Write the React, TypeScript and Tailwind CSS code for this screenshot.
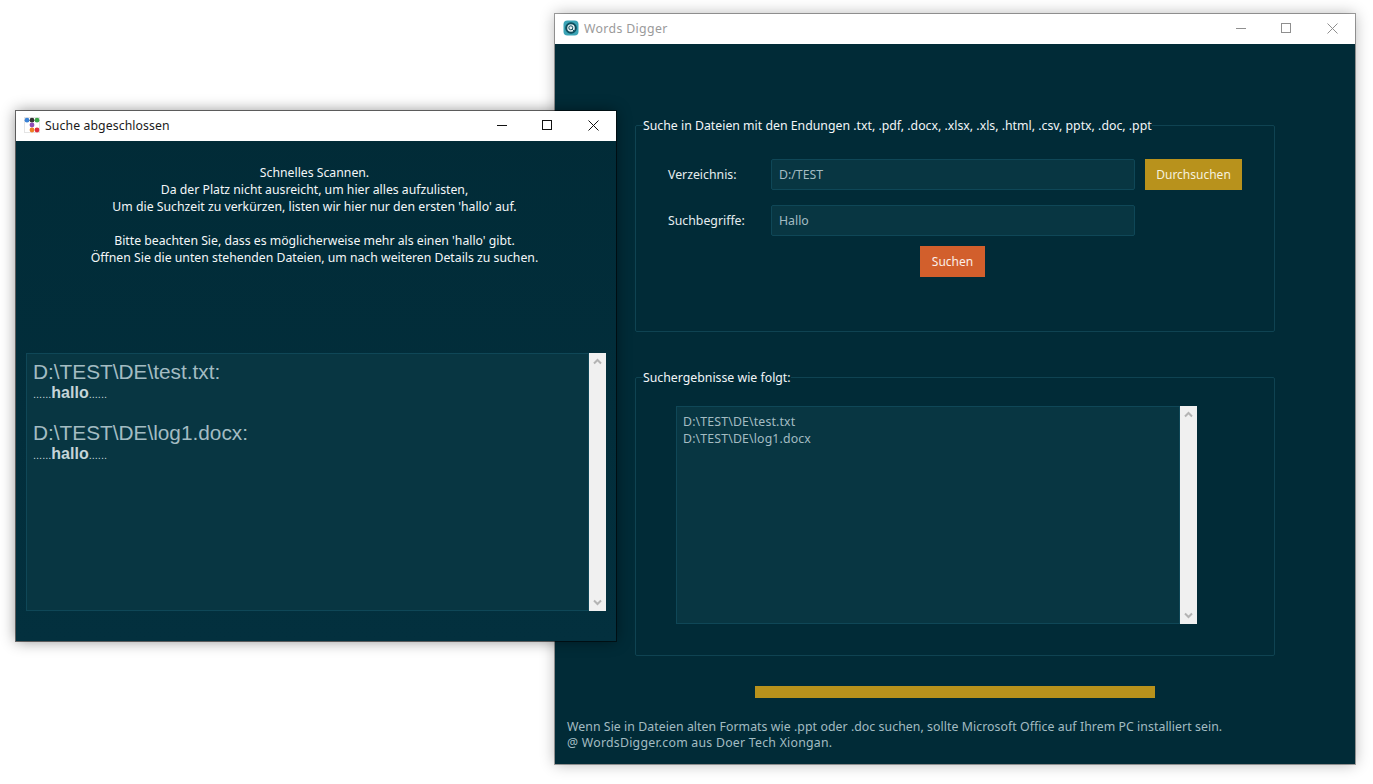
const ui = '"Noto Sans", "Open Sans", sans-serif';

function Chevron({ up, className }: { up?: boolean; className?: string }) {
  return (
    <svg width="9" height="7" viewBox="0 0 9 7" className={className}>
      <path d={up ? "M1 5.5 L4.5 2 L8 5.5" : "M1 1.5 L4.5 5 L8 1.5"} fill="none" stroke="#b4b4b4" strokeWidth="2" />
    </svg>
  );
}

function Scrollbar() {
  return (
    <div className="w-[17px] shrink-0 bg-[#f0f0f0] flex flex-col items-center justify-between py-[5px]">
      <Chevron up />
      <Chevron />
    </div>
  );
}

function WinButtons({ color }: { color: string }) {
  return (
    <div className="flex items-center">
      <div className="w-[46px] flex justify-center pl-[2px]">
        <svg width="10" height="10" viewBox="0 0 10 10"><path d="M0 5.5H10" stroke={color} /></svg>
      </div>
      <div className="w-[46px] flex justify-center">
        <svg width="10" height="10" viewBox="0 0 10 10"><rect x=".5" y=".5" width="9" height="9" fill="none" stroke={color} /></svg>
      </div>
      <div className="w-[46px] flex justify-center">
        <svg width="11" height="11" viewBox="0 0 11 11"><path d="M.5 .5L10.5 10.5M10.5 .5L.5 10.5" stroke={color} /></svg>
      </div>
    </div>
  );
}

function DotsIcon() {
  return (
    <svg width="16" height="16" viewBox="0 0 16 16">
      <rect x=".5" y=".5" width="15" height="15" fill="#fff" stroke="#e4e4e4" />
      <circle cx="3" cy="3.2" r="2.4" fill="#3b82d6" />
      <circle cx="8" cy="3.2" r="2.4" fill="#333" />
      <circle cx="13" cy="3.2" r="2.4" fill="#3aa648" />
      <circle cx="8" cy="8" r="2.4" fill="#8e4bb5" />
      <circle cx="8" cy="13" r="2.4" fill="#ee7f22" />
      <circle cx="13" cy="13" r="2.4" fill="#e02b3c" />
    </svg>
  );
}

function DiggerIcon() {
  return (
    <svg width="16" height="16" viewBox="0 0 16 16">
      <rect x="0.5" y="0.5" width="15" height="15" rx="4" fill="#3aa3b5" />
      <circle cx="8" cy="8" r="5.8" fill="#0c4d5c" />
      <circle cx="8" cy="8" r="3.8" fill="#e6f0f2" />
      <circle cx="7.8" cy="7.8" r="2" fill="none" stroke="#14505e" />
      <path d="M9.2 9.2L11 11" stroke="#14505e" />
    </svg>
  );
}

function Field({ label, value }: { label: string; value: string }) {
  return (
    <>
      <span className="w-[103px] shrink-0 text-[#e6eef0]">{label}</span>
      <div className="w-[364px] h-[31px] shrink-0 flex items-center px-[7px] bg-[#083642] border border-[#0f4757] rounded-[2px] text-[#a3bcc2]">
        {value}
      </div>
    </>
  );
}

function MainWindow() {
  return (
    <div
      className="absolute left-[555px] top-[14px] w-[800px] h-[750px] flex flex-col bg-[#012b37] shadow-[0_0_14px_rgba(0,0,0,0.3)] outline outline-1 outline-black/35 text-[12.3px] leading-[17px]"
      style={{ fontFamily: ui }}
    >
      <div className="h-[30px] shrink-0 bg-white flex items-center justify-between pl-[8px] pb-[2px]">
        <div className="flex items-center gap-[5px] text-[#9a9a9a] tracking-[0.35px]">
          <DiggerIcon />
          <span>Words Digger</span>
        </div>
        <WinButtons color="#8f8f8f" />
      </div>

      <div className="flex-1 flex flex-col pt-[73px]">
        <fieldset className="mx-[80px] w-[640px] h-[215px] border border-[#0f4352] rounded-[2px] min-w-0">
          <legend className="ml-[7px] text-[#f2f6f7] whitespace-nowrap">
            Suche in Dateien mit den Endungen .txt, .pdf, .docx, .xlsx, .xls, .html, .csv, pptx, .doc, .ppt
          </legend>
          <div className="px-[32px]">
            <div className="flex items-center mt-[25px]">
              <Field label="Verzeichnis:" value="D:/TEST" />
              <button className="ml-[10px] w-[98px] h-[31px] bg-[#b8921c] text-[#f6f1df] text-[12px]">Durchsuchen</button>
            </div>
            <div className="flex items-center mt-[15px]">
              <Field label="Suchbegriffe:" value="Hallo" />
            </div>
            <div className="flex mt-[10px] pl-[252px]">
              <button className="w-[65px] h-[31px] bg-[#d25f2c] text-[#fbeee8] text-[12px]">Suchen</button>
            </div>
          </div>
        </fieldset>

        <fieldset className="mx-[80px] mt-[37px] w-[640px] h-[287px] border border-[#0f4352] rounded-[2px] min-w-0">
          <legend className="ml-[7px] text-[#f2f6f7] whitespace-nowrap">Suchergebnisse wie folgt:</legend>
          <div className="flex w-[521px] h-[218px] mt-[20px] ml-[40px]">
            <div className="flex-1 bg-[#083642] border border-[#0f4757] px-[6px] pt-[6px] text-[#a3bcc2] tracking-[0.15px]">
              <div>D:\TEST\DE\test.txt</div>
              <div>D:\TEST\DE\log1.docx</div>
            </div>
            <Scrollbar />
          </div>
        </fieldset>

        <div className="ml-[200px] mt-[30px] w-[400px] h-[12px] bg-[#b8921c]" />

        <div className="ml-[12px] mt-[20px] text-[#a3bcc2]">
          <div className="tracking-[0.06px]">Wenn Sie in Dateien alten Formats wie .ppt oder .doc suchen, sollte Microsoft Office auf Ihrem PC installiert sein.</div>
          <div className="mt-[-1px] tracking-[0.25px]">@ WordsDigger.com aus Doer Tech Xiongan.</div>
        </div>
      </div>
    </div>
  );
}

function ResultWindow() {
  return (
    <div
      className="absolute left-[16px] top-[111px] w-[600px] h-[530px] flex flex-col bg-gradient-to-b from-[#012b37] to-[#03303e] shadow-[0_0_14px_rgba(0,0,0,0.45)] outline outline-1 outline-black/55 text-[12.25px] leading-[17px]"
      style={{ fontFamily: ui }}
    >
      <div className="h-[30px] shrink-0 bg-white flex items-center justify-between pl-[8px] pb-[2px]">
        <div className="flex-1 flex items-center gap-[5px] text-[#1a1a1a] tracking-[0.1px]">
          <DotsIcon />
          <span>Suche abgeschlossen</span>
        </div>
        <WinButtons color="#111" />
      </div>

      <div className="flex-1 flex flex-col px-[10px] pt-[23px]">
        <div className="text-center text-[#f4f7f8] h-[189px] pr-[3px]">
          <div>Schnelles Scannen.</div>
          <div>Da der Platz nicht ausreicht, um hier alles aufzulisten,</div>
          <div>Um die Suchzeit zu verkürzen, listen wir hier nur den ersten 'hallo' auf.</div>
          <div className="mt-[17px]">Bitte beachten Sie, dass es möglicherweise mehr als einen 'hallo' gibt.</div>
          <div>Öffnen Sie die unten stehenden Dateien, um nach weiteren Details zu suchen.</div>
        </div>
        <div className="flex w-[580px] h-[258px]">
          <div
            className="flex-1 bg-[#083642] border border-[#0f4757] px-[6px] pt-[6px] text-[#a3bcc2]"
            style={{ fontFamily: '"Liberation Sans", Arial, sans-serif' }}
          >
            <div className="text-[20.8px] leading-[24px]">D:\TEST\DE\test.txt:</div>
            <div className="text-[11px] leading-[18px] mb-[18px] text-[#c5d4d8]">......<b className="text-[16px]">hallo</b>......</div>
            <div className="text-[20.8px] leading-[24px]">D:\TEST\DE\log1.docx:</div>
            <div className="text-[11px] leading-[18px] text-[#c5d4d8]">......<b className="text-[16px]">hallo</b>......</div>
          </div>
          <Scrollbar />
        </div>
      </div>
    </div>
  );
}

export default function App() {
  return (
    <div className="relative w-[1373px] h-[784px] overflow-hidden bg-white">
      <MainWindow />
      <ResultWindow />
    </div>
  );
}
